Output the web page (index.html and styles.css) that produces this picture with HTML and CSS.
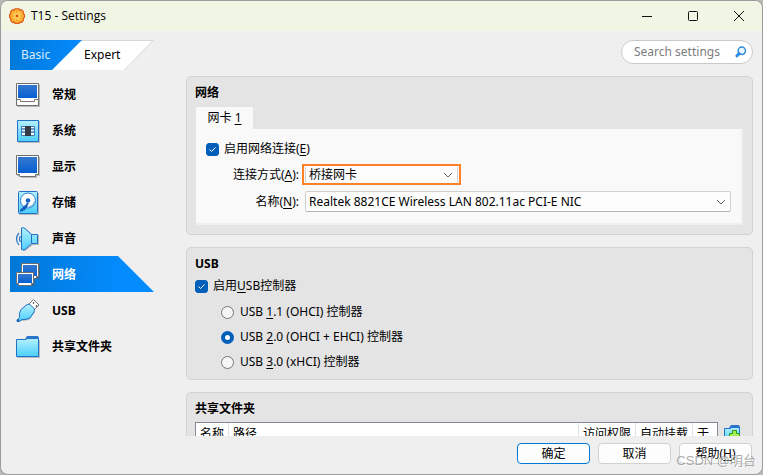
FILE: index.html
```html
<!DOCTYPE html>
<html lang="zh-CN">
<head>
    <meta charset="UTF-8">
    <meta name="viewport" content="width=device-width, initial-scale=1.0">
    <title>T15 - Settings</title>
    <link rel="stylesheet" href="styles.css">
</head>
<body>
    <!-- shared gradients for the icons -->
    <svg class="defs" width="0" height="0" aria-hidden="true">
        <defs>
            <linearGradient id="screen" x1="0" y1="0" x2="0" y2="1"><stop offset="0" stop-color="#3478cf"/><stop offset="1" stop-color="#0560d2"/></linearGradient>
            <linearGradient id="sky" x1="0" y1="0" x2="0" y2="1"><stop offset="0" stop-color="#b4f0fe"/><stop offset="1" stop-color="#4ccffc"/></linearGradient>
        </defs>
    </svg>

    <div class="window">
        <header class="titlebar">
            <svg class="gear" width="16" height="16" viewBox="0 0 16 16">
                <path d="M6 .8h4l.8 1.300 2-.2 1.600 2-.3 1.700 1.300 1v3l-1.300 1 .3 1.700-1.600 2-2-.2-.8 1.300H6l-.8-1.300-2 .2-1.600-2 .3-1.700-1.300-1v-3l1.300-1-.3-1.700 1.600-2 2 .2z" fill="#ffb431" stroke="#df5a18" stroke-width="1.200" stroke-linejoin="round"/>
                <circle cx="8" cy="8" r="3.800" fill="#ffc94a" stroke="#ffdf7a"/>
                <path d="M8 3v2M8 11v2M3 8h2M11 8h2M5 4.500l1 1M10.500 10l1 1M11 4.500l-1 1M5 11l1-1" stroke="#ef8422"/>
                <circle cx="8" cy="8" r="1.300" fill="#d2511b"/>
            </svg>
            <h1>T15 - Settings</h1>
            <div class="win-buttons">
                <button type="button" aria-label="最小化"><svg width="12" height="12" viewBox="0 0 12 12"><path d="M1 6.500h10"/></svg></button>
                <button type="button" aria-label="最大化"><svg width="12" height="12" viewBox="0 0 12 12"><rect x="1.500" y="1.500" width="9" height="9" rx="1"/></svg></button>
                <button type="button" aria-label="关闭"><svg width="12" height="12" viewBox="0 0 12 12"><path d="M1 1l10 10M11 1L1 11"/></svg></button>
            </div>
        </header>

        <div class="toolbar">
            <div class="modes">
                <button type="button" class="mode basic">Basic</button>
                <button type="button" class="mode expert">Expert</button>
            </div>
            <div class="search">
                <input type="text" placeholder="Search settings" aria-label="Search settings">
                <svg width="12" height="12" viewBox="0 0 12 12"><circle cx="6.800" cy="4.800" r="3.700" fill="#eefaff" stroke="#2b8be0" stroke-width="1.500"/><path d="M4.200 7.500L2 9.800" stroke="#2b8be0" stroke-width="3" stroke-linecap="round"/></svg>
            </div>
        </div>

        <div class="main">
            <nav class="sidebar">
                <a href="#general">
                    <svg width="24" height="24" viewBox="0 0 24 24"><path d="M1.500 1.500H24V24H1.500z" fill="#b8b8b8"/><path d="M.5.5h22v22H.5z" fill="#fff" stroke="#6e6e6e"/><path d="M2 2h19v13H2z" fill="url(#screen)"/><path d="M1 16.500h3.500v2h14v-2H22" fill="none" stroke="#777"/></svg>
                    常规
                </a>
                <a href="#system">
                    <svg width="24" height="24" viewBox="0 0 24 24"><path d="M2 2h22v22H2z" fill="#bbb"/><path d="M1.500 1.500h21v21h-21z" fill="url(#sky)" stroke="#2470c4"/><path d="M5.500 7.500h13v2.500h-13zM5.500 10h13v3h-13zM5.500 13h13v3.500h-13z" fill="#fff" stroke="#3a78b8"/><path d="M9 7h6v10H9z" fill="#333a44"/></svg>
                    系统
                </a>
                <a href="#display">
                    <svg width="24" height="24" viewBox="0 0 24 24"><path d="M1 2h23v19h-3v2H5v-2H1z" fill="#bbb"/><path d="M.5.5h22v19h-3v2h-16v-2h-3z" fill="#fff" stroke="#6e6e6e"/><path d="M2 2h19v16H2z" fill="url(#screen)"/></svg>
                    显示
                </a>
                <a href="#storage">
                    <svg width="24" height="24" viewBox="0 0 24 24"><path d="M3 2h20v22H3z" fill="#bbb"/><rect x="2.500" y=".5" width="19" height="22" rx="1" fill="url(#sky)" stroke="#2470c4"/><circle cx="12" cy="9.500" r="7.500" fill="#fff" stroke="#2d7fd0"/><circle cx="12" cy="9.500" r="2.300" fill="#1766c5"/><path d="M13 16q5-1 6-6" fill="none" stroke="#58a3dd"/><path d="M4 19l5-5 3 1-3 4-5 2z" fill="#145fbd"/><path d="M10 15l2-3" stroke="#145fbd" stroke-width="2"/></svg>
                    存储
                </a>
                <a href="#audio">
                    <svg width="24" height="24" viewBox="0 0 24 24"><path d="M7 3l2-2 8 7h6v10h-6l-8 6H7z" fill="#b8b8b8"/><path d="M5.500 1q2-1 3.500.5l6.500 6h6v9h-6l-6.500 6q-1.500 1-3.500 0z" fill="url(#sky)" stroke="#2470c4"/><path d="M15.500 7.500v9" stroke="#2470c4"/><path d="M4.500 9q-2 3 0 6M3 6q-5 6 0 12" fill="none" stroke="#2d78c6" stroke-width="1.200"/></svg>
                    声音
                </a>
                <a href="#network" class="active">
                    <svg width="24" height="24" viewBox="0 0 24 24"><path d="M6 1h18v15h-5v7H3v-3H1V10h5z" fill="#415f78" opacity=".6"/><path d="M5.500.5h17v13h-2v2h-13v-2h-2z" fill="#fff" stroke="#6e6e6e"/><path d="M7 2h14v11H7z" fill="url(#screen)"/><path d="M.5 9.500h17v11h-2v2h-13v-2h-2z" fill="#fff" stroke="#6e6e6e"/><path d="M2 11h14v9H2z" fill="url(#screen)"/></svg>
                    网络
                </a>
                <a href="#usb">
                    <svg width="24" height="24" viewBox="0 0 24 24"><path d="M3 22L5 14l8-7 6 6-6 8-6 1z" fill="#bbb"/><path d="M12.500 5.500l5-5 5.500 5.500-5 5z" fill="#fff" stroke="#777"/><path d="M17 3.500l1 1M20 6.500l1 1" stroke="#444" stroke-width="1.500"/><path d="M11 5.500q2-1 3.500.5l3.500 3.500q1 2 0 3.500l-4 6q-4 2-8 1.500l-2.500 2q-3 .5-2-2l2-2q-1-4 1.500-8z" fill="url(#sky)" stroke="#2470c4"/><circle cx="2" cy="21.500" r="1.500" fill="#1b65ba"/></svg>
                    USB
                </a>
                <a href="#shared">
                    <svg width="24" height="24" viewBox="0 0 24 24"><path d="M1 5h23v18H1z" fill="#bbb"/><path d="M9 4l2-3h11l1 2v18H9z" fill="#2a74cb"/><path d="M.5 4.500h9l2-1h11v18H.5z" fill="url(#sky)" stroke="#1e72c8"/></svg>
                    共享文件夹
                </a>
            </nav>

            <main class="panels">
                <section class="group" id="network">
                    <h2>网络</h2>
                    <div class="tabs">
                        <button type="button" class="tab">网卡 <u>1</u></button>
                        <div class="tab-page">
                            <label class="check"><input type="checkbox" checked><span>启用网络连接(<u>E</u>)</span></label>
                            <div class="field">
                                <label for="attach">连接方式(<u>A</u>):</label>
                                <select id="attach" class="highlight"><option>桥接网卡</option></select>
                            </div>
                            <div class="field">
                                <label for="adapter">名称(<u>N</u>):</label>
                                <select id="adapter"><option>Realtek 8821CE Wireless LAN 802.11ac PCI-E NIC</option></select>
                            </div>
                        </div>
                    </div>
                </section>

                <section class="group" id="usb">
                    <h2>USB</h2>
                    <label class="check"><input type="checkbox" checked><span>启用<u>U</u>SB控制器</span></label>
                    <div class="radios">
                        <label class="check"><input type="radio" name="usb"><span>USB <u>1</u>.1 (OHCI) 控制器</span></label>
                        <label class="check"><input type="radio" name="usb" checked><span>USB <u>2</u>.0 (OHCI + EHCI) 控制器</span></label>
                        <label class="check"><input type="radio" name="usb"><span>USB <u>3</u>.0 (xHCI) 控制器</span></label>
                    </div>
                </section>

                <section class="group" id="shared">
                    <h2>共享文件夹</h2>
                    <div class="folders">
                        <table>
                            <thead>
                                <tr><th class="name">名称</th><th>路径</th><th class="wide">访问权限</th><th class="wide">自动挂载</th><th class="at">于</th></tr>
                            </thead>
                        </table>
                        <button type="button" class="add" aria-label="添加共享文件夹">
                            <svg width="16" height="16" viewBox="0 0 16 16"><path d="M5 3l2-3h8l1 2v13H5z" fill="#2a74cb"/><path d="M.5 3.500h6l1-1h8v13H.5z" fill="url(#sky)" stroke="#1e72c8"/><path d="M8.500 5.500h4v3h3v4h-3v3h-4v-3h-3v-4h3z" fill="#a5ef55" stroke="#2b9a1c"/></svg>
                        </button>
                    </div>
                </section>
            </main>
        </div>

        <footer class="actions">
            <button type="button" class="primary">确定</button>
            <button type="button">取消</button>
            <button type="button">帮助(<u>H</u>)</button>
        </footer>
        <span class="watermark">CSDN @明台</span>
    </div>
</body>
</html>
```
FILE: styles.css
```css
* {
    box-sizing: border-box;
}
body {
    margin: 0;
    background: #b9b6b4;
    font: 12px/18px "Noto Sans", "Noto Sans CJK SC", sans-serif;
    color: #000;
}
button, input, select {
    font: inherit;
    color: inherit;
}
button {
    padding: 0;
    border: none;
    background: none;
}
.defs {
    position: absolute;
}
u {
    text-underline-offset: 2px;
}
.window {
    position: relative;
    display: flex;
    flex-direction: column;
    height: 100vh;
    border: 1px solid #9b9b9b;
    border-radius: 8px;
    background: #efefef;
    overflow: hidden;
}

/* title bar */
.titlebar {
    display: flex;
    align-items: center;
    flex: none;
    height: 30px;
    padding-left: 8px;
    background: #f1f5e4;
}
.titlebar h1 {
    flex: 1;
    margin: 0 0 0 6px;
    font: 12px/18px "Open Sans", "Noto Sans", sans-serif;
}
.win-buttons {
    display: flex;
}
.win-buttons button {
    display: flex;
    align-items: center;
    justify-content: center;
    width: 46px;
    height: 28px;
}
.win-buttons path, .win-buttons rect {
    fill: none;
    stroke: #111;
}

/* mode switch and search */
.toolbar {
    display: flex;
    justify-content: space-between;
    flex: none;
    padding: 9px 9px 6px;
}
.modes {
    display: flex;
    height: 30px;
    background: #d8d8d8;
    clip-path: polygon(0 0, 100% 0, 115px 100%, 0 100%);
}
.mode {
    text-align: left;
}
.mode.basic {
    z-index: 1;
    width: 72px;
    padding-left: 11px;
    color: #d9edff;
    background: linear-gradient(100deg, #0078d7, #048cff);
    clip-path: polygon(0 0, 100% 0, 42px 100%, 0 100%);
}
.mode.expert {
    width: 102px;
    margin-left: -30px;
    padding-left: 32px;
    background: #fff;
    clip-path: polygon(0 1px, 100px 1px, 72px 100%, 0 100%);
}
.search {
    display: flex;
    align-items: center;
    width: 132px;
    height: 24px;
    padding: 0 5px 0 12px;
    border: 1px solid #c9c9c9;
    border-radius: 12px;
    background: #fff;
}
.search input {
    flex: 1;
    min-width: 0;
    padding: 0;
    border: none;
    outline: none;
    background: none;
}
.search input::placeholder {
    color: #7c7c7c;
}

/* category list */
.main {
    display: flex;
    flex: 1;
    min-height: 0;
}
.sidebar {
    flex: none;
    width: 153px;
    padding-left: 9px;
}
.sidebar a {
    display: flex;
    align-items: center;
    gap: 12px;
    height: 36px;
    padding: 2px 0 0 6px;
    color: #000;
    font-weight: bold;
    text-decoration: none;
}
.sidebar svg {
    overflow: visible;
}
.sidebar a.active {
    color: #fff;
    background: linear-gradient(100deg, #0078d7, #048cff 80%);
    clip-path: polygon(0 0, 108px 0, 100% 100%, 0 100%);
}

/* settings groups */
.panels {
    flex: 1;
    min-width: 0;
    margin-left: 32px;
    padding-right: 9px;
    overflow: hidden;
}
.group {
    margin-bottom: 12px;
    padding: 7px 8px 9px;
    border: 1px solid #d2d2d2;
    border-radius: 5px;
    background: #e4e4e4;
}
.group h2 {
    margin: 0 0 4px;
    font-size: 12px;
    line-height: 18px;
}
.tabs {
    padding: 1px 1px 0;
}
.tab {
    display: block;
    width: 57px;
    height: 22px;
    background: #f9f9f9;
}
.tab-page {
    display: flex;
    flex-direction: column;
    gap: 6px;
    padding: 11px 10px 11px;
    border-right: 2px solid #efefef;
    border-bottom: 2px solid #efefef;
    background: #f9f9f9;
}
.check {
    display: flex;
    align-items: center;
    gap: 5px;
}
.check input {
    appearance: none;
    flex: none;
    width: 13px;
    height: 13px;
    margin: 0;
    border: 1px solid #757575;
    background: #f5f5f5;
}
.check input[type="checkbox"] {
    border-radius: 3px;
}
.check input[type="checkbox"]:checked {
    border-color: #005fb8;
    background: #005fb8 url("data:image/svg+xml,%3Csvg xmlns='http://www.w3.org/2000/svg' viewBox='0 0 11 11'%3E%3Cpath d='M2.500 5.500l2 2 4-4' fill='none' stroke='white'/%3E%3C/svg%3E");
}
.check input[type="radio"] {
    border-radius: 50%;
}
.check input[type="radio"]:checked {
    border: 4px solid #005fb8;
    background: #fff;
}
.field {
    display: grid;
    grid-template-columns: 93px 1fr;
    align-items: center;
    gap: 6px;
    min-height: 21px;
}
.field label {
    text-align: right;
}
.field select {
    appearance: none;
    width: 100%;
    height: 21px;
    padding: 0 20px 0 3px;
    border: 1px solid #cfcfcf;
    border-bottom-color: #b5b5b5;
    border-radius: 2px;
    background: #fdfdfd url("data:image/svg+xml,%3Csvg xmlns='http://www.w3.org/2000/svg' width='10' height='6'%3E%3Cpath d='M1 1l4 4 4-4' fill='none' stroke='%23666'/%3E%3C/svg%3E") no-repeat right 4px center;
}
.field select.highlight {
    width: 153px;
    height: 15px;
    border-width: 0 1px;
    border-radius: 0;
    line-height: 15px;
    outline: 2px solid #ff8127;
    outline-offset: 1px;
}
#usb {
    padding-bottom: 8px;
}
.radios {
    display: flex;
    flex-direction: column;
    gap: 7px;
    padding: 8px 0 0 26px;
}
.radios .check {
    gap: 6px;
}

/* shared folders */
.folders {
    display: flex;
    gap: 6px;
}
.folders table {
    flex: 1;
    height: 60px;
    table-layout: fixed;
    border: 1px solid #8b8796;
    border-collapse: separate;
    border-spacing: 0;
    background: #fff;
}
.folders th {
    padding: 2px 4px;
    border-right: 1px solid #e2e2e2;
    font-weight: normal;
    text-align: left;
    vertical-align: top;
    white-space: nowrap;
}
.folders th:last-child {
    border-right: none;
}
.folders .name {
    width: 32px;
}
.folders .wide {
    width: 56px;
}
.folders .at {
    width: 24px;
}
.folders .add {
    align-self: flex-start;
    display: flex;
    padding: 3px 4px 0 0;
}

/* bottom buttons */
.actions {
    display: flex;
    justify-content: flex-end;
    gap: 8px;
    flex: none;
    padding: 7px 10px 10px;
}
.actions button {
    width: 73px;
    height: 21px;
    border: 1px solid #d0d0d0;
    border-radius: 4px;
    background: #fdfdfd;
}
.actions .primary {
    border-color: #0078d4;
}
.watermark {
    position: absolute;
    right: 6px;
    bottom: 4px;
    font: 13px/18px "Liberation Sans", "Noto Sans CJK SC", sans-serif;
    color: rgba(150, 150, 150, 0.8);
    text-shadow: 1px 1px 0 rgba(255, 255, 255, 0.6);
    pointer-events: none;
}
```
